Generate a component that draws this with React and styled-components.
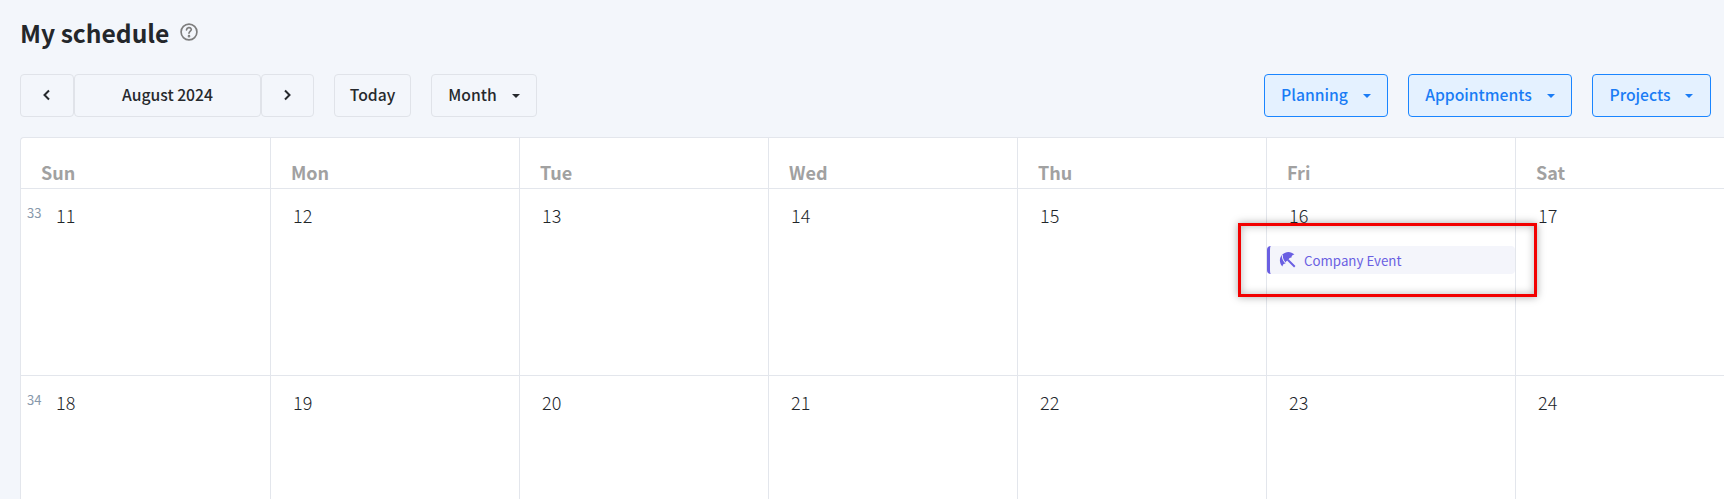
import React from "react";
import styled, { createGlobalStyle } from "styled-components";

const Global = createGlobalStyle`
  html, body { margin: 0; padding: 0; height: 499px; overflow: hidden; background: #f3f6fb; }
  body { font-family: "Noto Sans CJK JP", "Noto Sans", sans-serif; color: #212529; }
  * { box-sizing: border-box; }
`;
const Page = styled.div`
  position: relative; width: 1724px; height: 499px; overflow: hidden;
  padding: 14px 13px 0 20px;
`;
const TitleRow = styled.div`display: flex; align-items: center; height: 36px; gap: 10px;`;
const Title = styled.h1`margin: 0; font-size: 24.6px; line-height: 36px; font-weight: 700; color: #24272b;`;
const HelpIcon = styled.svg`width: 20px; height: 20px; display: block; color: #7d7d7d;`;
const Toolbar = styled.div`display: flex; align-items: stretch; height: 43px; margin-top: 24px;`;
const Group = styled.div`display: flex; margin-right: 20px;`;
const Button = styled.button`
  font-family: inherit; height: 43px; font-size: 15.7px; font-weight: 500; line-height: 1;
  padding: 0 0 2px; display: flex; align-items: center; justify-content: center;
  color: ${p => p.$primary ? "#1a7cf5" : "#26292d"};
  background: ${p => p.$primary ? "#e4f1ff" : "#f3f6fb"};
  border: 1px solid ${p => p.$primary ? "#1a85ff" : "#e0e3e9"};
  border-radius: 4px;
  width: ${p => p.$w}px;
  margin-right: ${p => p.$mr || 0}px;
  margin-left: ${p => p.$ml || 0}px;
`;
const Caret = styled.span`
  display: inline-block; width: 0; height: 0; margin-left: 15px; margin-top: 3px;
  border-left: 4px solid transparent; border-right: 4px solid transparent;
  border-top: 4px solid currentColor;
`;
const Spacer = styled.div`flex: 1;`;
const Chevron = styled.svg`width: 12px; height: 12px; display: block;`;
const Calendar = styled.div`
  margin-top: 20px; width: 1745px;
  display: grid; grid-template-columns: 250px repeat(6, 249px);
  background: #fff; border-top: 1px solid #e3e6ec; border-left: 1px solid #e3e6ec;
  border-radius: 4px 0 0 0;
`;
const HeadCell = styled.div`
  height: 51px; padding: 21px 0 0 20px; font-size: 18px; line-height: 26px; font-weight: 700; color: #a1a1a1;
  border-right: 1px solid #e3e6ec; border-bottom: 1px solid #e3e6ec;
`;
const DayCell = styled.div`
  height: 187px; border-right: 1px solid #e3e6ec; border-bottom: 1px solid #e3e6ec;
  padding: 14px 0 0 ${p => p.$first ? 6 : 22}px;
  display: flex; flex-direction: column;
`;
const DayTop = styled.div`display: flex; align-items: flex-start; height: 24px;`;
const WeekNo = styled.span`font-size: 13px; line-height: 13px; margin-top: 3px; width: 29px; color: #8798ab; font-weight: 400;`;
const DayNo = styled.span`font-size: 18px; line-height: 24px; color: #212529; font-weight: 300;`;
const Event = styled.div`
  margin: 19px 0 0 -22px; height: 28px; background: #f4f5fb; border-left: 3px solid #6a5fe2;
  border-radius: 4px; display: flex; align-items: center; padding: 0 0 0 9px; gap: 7px;
  color: #6a5fe2; font-size: 13.3px;
`;
const RedBox = styled.div`
  position: absolute; left: 1238px; top: 223px; width: 299px; height: 74px;
  border: 3px solid #f20000; box-shadow: 0 0 8px rgba(0,0,0,.35), inset 0 0 8px rgba(0,0,0,.28);
`;
const Umbrella = styled.svg`width: 18px; height: 18px; display: block;`;

const days = ["Sun","Mon","Tue","Wed","Thu","Fri","Sat"];
const weeks = [{ no: 33, d: [11,12,13,14,15,16,17] }, { no: 34, d: [18,19,20,21,22,23,24] }];

export default function App() {
  return (
    <Page>
      <Global />
      <TitleRow>
        <Title>My schedule</Title>
        <HelpIcon viewBox="0 0 24 24" fill="none" stroke="currentColor" strokeWidth="2" strokeLinecap="round">
          <circle cx="12" cy="12" r="9.5" />
          <path d="M9 9.5a3 3 0 0 1 5.8-.8c.5 1.9-2.8 2.6-2.8 4.8" />
          <circle cx="12" cy="17" r="0.6" fill="currentColor" />
        </HelpIcon>
      </TitleRow>
      <Toolbar>
        <Group>
          <Button $w={54} aria-label="Previous">
            <Chevron viewBox="0 0 12 12" fill="none" stroke="currentColor" strokeWidth="2"><path d="M8 1.5 3.5 6 8 10.5" /></Chevron>
          </Button>
          <Button $w={187}>August 2024</Button>
          <Button $w={53} aria-label="Next">
            <Chevron viewBox="0 0 12 12" fill="none" stroke="currentColor" strokeWidth="2"><path d="M3 1.5 7.5 6 3 10.5" /></Chevron>
          </Button>
        </Group>
        <Button $w={77} $mr={20}>Today</Button>
        <Button $w={106}>Month<Caret /></Button>
        <Spacer />
        <Button $primary $w={124}>Planning<Caret /></Button>
        <Button $primary $w={164} $ml={20}>Appointments<Caret /></Button>
        <Button $primary $w={119} $ml={20}>Projects<Caret /></Button>
      </Toolbar>
      <Calendar>
        {days.map(d => <HeadCell key={d}>{d}</HeadCell>)}
        {weeks.map(w => w.d.map((n, i) => (
          <DayCell key={n} $first={i === 0}>
            <DayTop>
              {i === 0 && <WeekNo>{w.no}</WeekNo>}
              <DayNo>{n}</DayNo>
            </DayTop>
            {n === 16 && (
              <Event>
                <Umbrella viewBox="0 0 16 16">
                  <g transform="rotate(-45 8 8)">
                    <path fill="currentColor" d="M.5 8.6C.5 4 3.9 1 8 1s7.5 3 7.5 7.6c-1.3-1.1-2.6-1.1-3.7 0-1.2-1.1-2.6-1.1-3.8 0-1.2-1.1-2.6-1.1-3.8 0-1.1-1.1-2.4-1.1-3.7 0z" />
                    <path fill="none" stroke="#f4f5fb" strokeWidth=".9" d="M4.6 8.4C4.6 5 6 2.6 7.6 1.4" />
                    <path fill="none" stroke="currentColor" strokeWidth="1.7" d="M8 8v8.5" />
                  </g>
                </Umbrella>
                Company Event
              </Event>
            )}
          </DayCell>
        )))}
      </Calendar>
      <RedBox />
    </Page>
  );
}
